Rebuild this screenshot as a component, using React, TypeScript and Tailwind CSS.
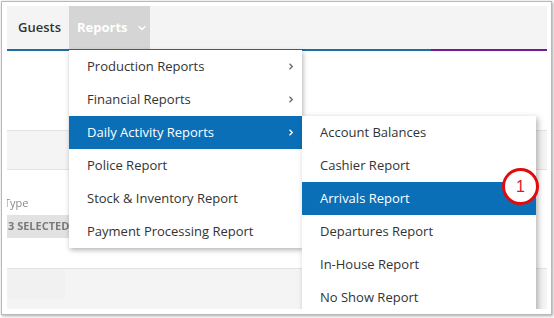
import { ChevronDown } from "lucide-react";

const mainItems = [
  { label: "Production Reports", sub: true },
  { label: "Financial Reports", sub: true },
  { label: "Daily Activity Reports", sub: true, active: true },
  { label: "Police Report" },
  { label: "Stock & Inventory Report" },
  { label: "Payment Processing Report" },
];

const dailyItems = [
  { label: "Account Balances" },
  { label: "Cashier Report" },
  { label: "Arrivals Report", active: true },
  { label: "Departures Report" },
  { label: "In-House Report" },
  { label: "No Show Report" },
];

function Chevron({ white }: { white?: boolean }) {
  return (
    <svg width="6" height="9" viewBox="0 0 6 9" className="shrink-0">
      <path d="M1.5 1.8 L4.3 4.5 L1.5 7.2" fill="none" stroke={white ? "#ffffff" : "#666666"} strokeWidth="1.3" />
    </svg>
  );
}

function MenuRow({ label, sub, active }: { label: string; sub?: boolean; active?: boolean }) {
  return (
    <div
      className={`h-[33px] flex items-center justify-between pl-[18px] pr-[8px] text-[13px] ${
        active ? "bg-[#0b6fb8] text-white" : "text-[#333333]"
      }`}
    >
      <span>{label}</span>
      {sub && <Chevron white={active} />}
    </div>
  );
}

export default function App() {
  return (
    <div className="w-[554px] h-[318px] bg-white overflow-hidden" style={{ fontFamily: '"Open Sans", "Noto Sans", sans-serif' }}>
      <div className="ml-[1px] mt-[1px] w-[551px] h-[314px] border border-[#b8b8b8] shadow-[1px_1px_3px_rgba(0,0,0,0.35)] pl-[5px] pt-[4px] pr-[3px] pb-[4px]">
        <div className="relative w-[540px] h-[303px] overflow-hidden bg-white">
          {/* tab bar */}
          <div className="h-[43px] bg-[#f4f4f4] flex">
            <div className="w-[62px] flex items-center pl-[11px] text-[13px] font-semibold text-[#333333]">Guests</div>
            <div className="w-[81px] bg-[#d5d5d5] flex items-center pl-[8px] gap-[8px] text-[13px] font-bold text-white">
              <span>Reports</span>
              <ChevronDown size={12} strokeWidth={2.5} className="text-white" />
            </div>
          </div>
          <div className="h-[2px] flex">
            <div className="w-[424px] bg-[#1b6e9e]" />
            <div className="flex-1 bg-[#6d1a9b]" />
          </div>

          {/* page behind */}
          <div className="h-[79px]" />
          <div className="h-[40px] bg-[#f4f4f4] border-y border-[#e3e3e3]" />
          <div className="h-[98px] pt-[26px]">
            <div className="text-[11px] text-[#8a8a8a] -ml-[3px] leading-[14px] blur-[0.4px]">Type</div>
            <div className="mt-[5px] flex gap-[18px]">
              <div className="w-[110px] h-[23px] bg-[#e2e2e2] flex items-center pl-[1px] text-[11px] font-bold text-[#7a7a7a] blur-[0.4px]">
                3 SELECTED
              </div>
              <div className="w-[150px] h-[23px] bg-[#ececec]" />
            </div>
          </div>
          <div className="h-[44px] bg-[#f4f4f4] border-t border-[#e3e3e3] flex">
            <div className="w-[58px] h-[30px] bg-[#f1f1f1]" />
          </div>

          {/* reports menu */}
          <div className="absolute left-[62px] top-[44px] w-[233px] bg-white shadow-[1px_2px_5px_rgba(0,0,0,0.3)] z-10">
            {mainItems.map((it) => (
              <MenuRow key={it.label} {...it} />
            ))}
          </div>

          {/* daily activity submenu */}
          <div className="absolute left-[295px] top-[110px] w-[234px] bg-white shadow-[2px_2px_6px_rgba(0,0,0,0.3)] z-20">
            {dailyItems.map((it) => (
              <MenuRow key={it.label} {...it} />
            ))}
          </div>

          {/* callout */}
          <div
            className="absolute left-[495px] top-[162px] w-[37px] h-[37px] rounded-full bg-white border-[3px] border-[#e00b0b] flex items-center justify-center text-[16px] text-[#e3132b] z-30"
            style={{ fontFamily: '"Liberation Sans", Arial, sans-serif' }}
          >
            1
          </div>
        </div>
      </div>
    </div>
  );
}
